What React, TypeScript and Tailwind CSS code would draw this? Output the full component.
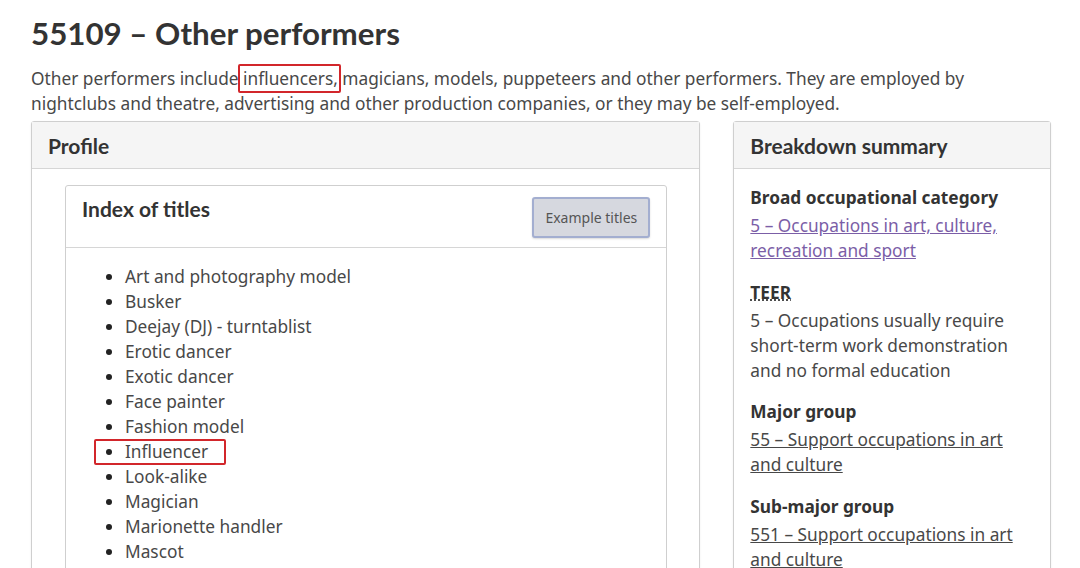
import React from 'react';

const titles = [
  'Art and photography model',
  'Busker',
  'Deejay (DJ) - turntablist',
  'Erotic dancer',
  'Exotic dancer',
  'Face painter',
  'Fashion model',
  'Influencer',
  'Look-alike',
  'Magician',
  'Marionette handler',
  'Mascot',
  'Mime',
];

const Panel = ({ title, children, className }: { title: string; children: React.ReactNode; className?: string }) => (
  <section className={`border border-[#cfcfcf] rounded-[3px] shadow-[0_1px_2px_rgba(0,0,0,0.08)] bg-white ${className ?? ''}`}>
    <div className="h-[47px] bg-[#f5f5f5] border-b border-[#d6d6d6] px-4 flex items-center">
      <h2 className="font-['Lato',sans-serif] font-bold text-[21px] text-[#333]">{title}</h2>
    </div>
    {children}
  </section>
);

const App = () => {
  return (
    <div className="w-[1080px] h-[568px] overflow-hidden bg-white font-['Noto_Sans',sans-serif] text-[#484848] text-[17.3px] leading-[25px]">
      <div className="pl-[31px] pr-[29px] pt-[13px]">
        <h1 className="font-['Lato',sans-serif] font-bold text-[31.3px] leading-[40px] text-[#333]">55109 – Other performers</h1>
        <p className="mt-[13px]">
          Other performers include{' '}
          <span className="relative">
            influencers,
            <span className="absolute left-[-5px] right-[-3px] top-[-3px] bottom-[-3px] border-2 border-[#d2262b] rounded-[2px]"></span>
          </span>{' '}
          magicians, models, puppeteers and other performers. They are employed by nightclubs and theatre, advertising and other production companies, or they may be self-employed.
        </p>

        <div className="mt-[5px] flex gap-[33px]">
          <Panel title="Profile" className="w-[670px] h-[480px]">
            <div className="pt-[16px] pl-[33px] pr-[32px]">
              <div className="border border-[#cfcfcf] rounded-[3px]">
                <div className="h-[62px] border-b border-[#d6d6d6] pl-4 pr-4 flex justify-between items-start">
                  <h3 className="mt-[11px] font-['Lato',sans-serif] font-bold text-[21px] leading-[24px] text-[#333]">Index of titles</h3>
                  <button className="mt-[11px] w-[118px] h-[41px] bg-[#d6d8df] border-2 border-[#a3aed0] rounded-[3px] text-[14px] text-[#555] shadow-[0_1px_2px_rgba(0,0,0,0.15)]">
                    Example titles
                  </button>
                </div>
                <ul className="list-disc pl-[59px] pt-[16px] pb-4 marker:text-[#222]">
                  {titles.map((t) => (
                    <li key={t} className="relative">
                      {t}
                      {t === 'Influencer' && (
                        <span className="absolute left-[-31px] top-0 w-[132px] h-[26px] border-2 border-[#d2262b] rounded-[2px]"></span>
                      )}
                    </li>
                  ))}
                </ul>
              </div>
            </div>
          </Panel>

          <Panel title="Breakdown summary" className="w-[318px] h-[480px]">
            <dl className="px-4 pt-[16px]">
              <dt className="font-bold text-[#333]">Broad occupational category</dt>
              <dd className="mt-[3px]">
                <a className="text-[#7b5ea7] underline">5 – Occupations in art, culture, recreation and sport</a>
              </dd>
              <dt className="mt-[17px] font-bold text-[#333]">
                <abbr className="underline decoration-dotted">TEER</abbr>
              </dt>
              <dd className="mt-[3px]">5 – Occupations usually require short-term work demonstration and no formal education</dd>
              <dt className="mt-[16px] font-bold text-[#333]">Major group</dt>
              <dd className="mt-[3px]">
                <a className="text-[#484848] underline">55 – Support occupations in art and culture</a>
              </dd>
              <dt className="mt-[17px] font-bold text-[#333]">Sub-major group</dt>
              <dd className="mt-[3px]">
                <a className="text-[#484848] underline">551 – Support occupations in art and culture</a>
              </dd>
            </dl>
          </Panel>
        </div>
      </div>
    </div>
  );
};

export default App;
